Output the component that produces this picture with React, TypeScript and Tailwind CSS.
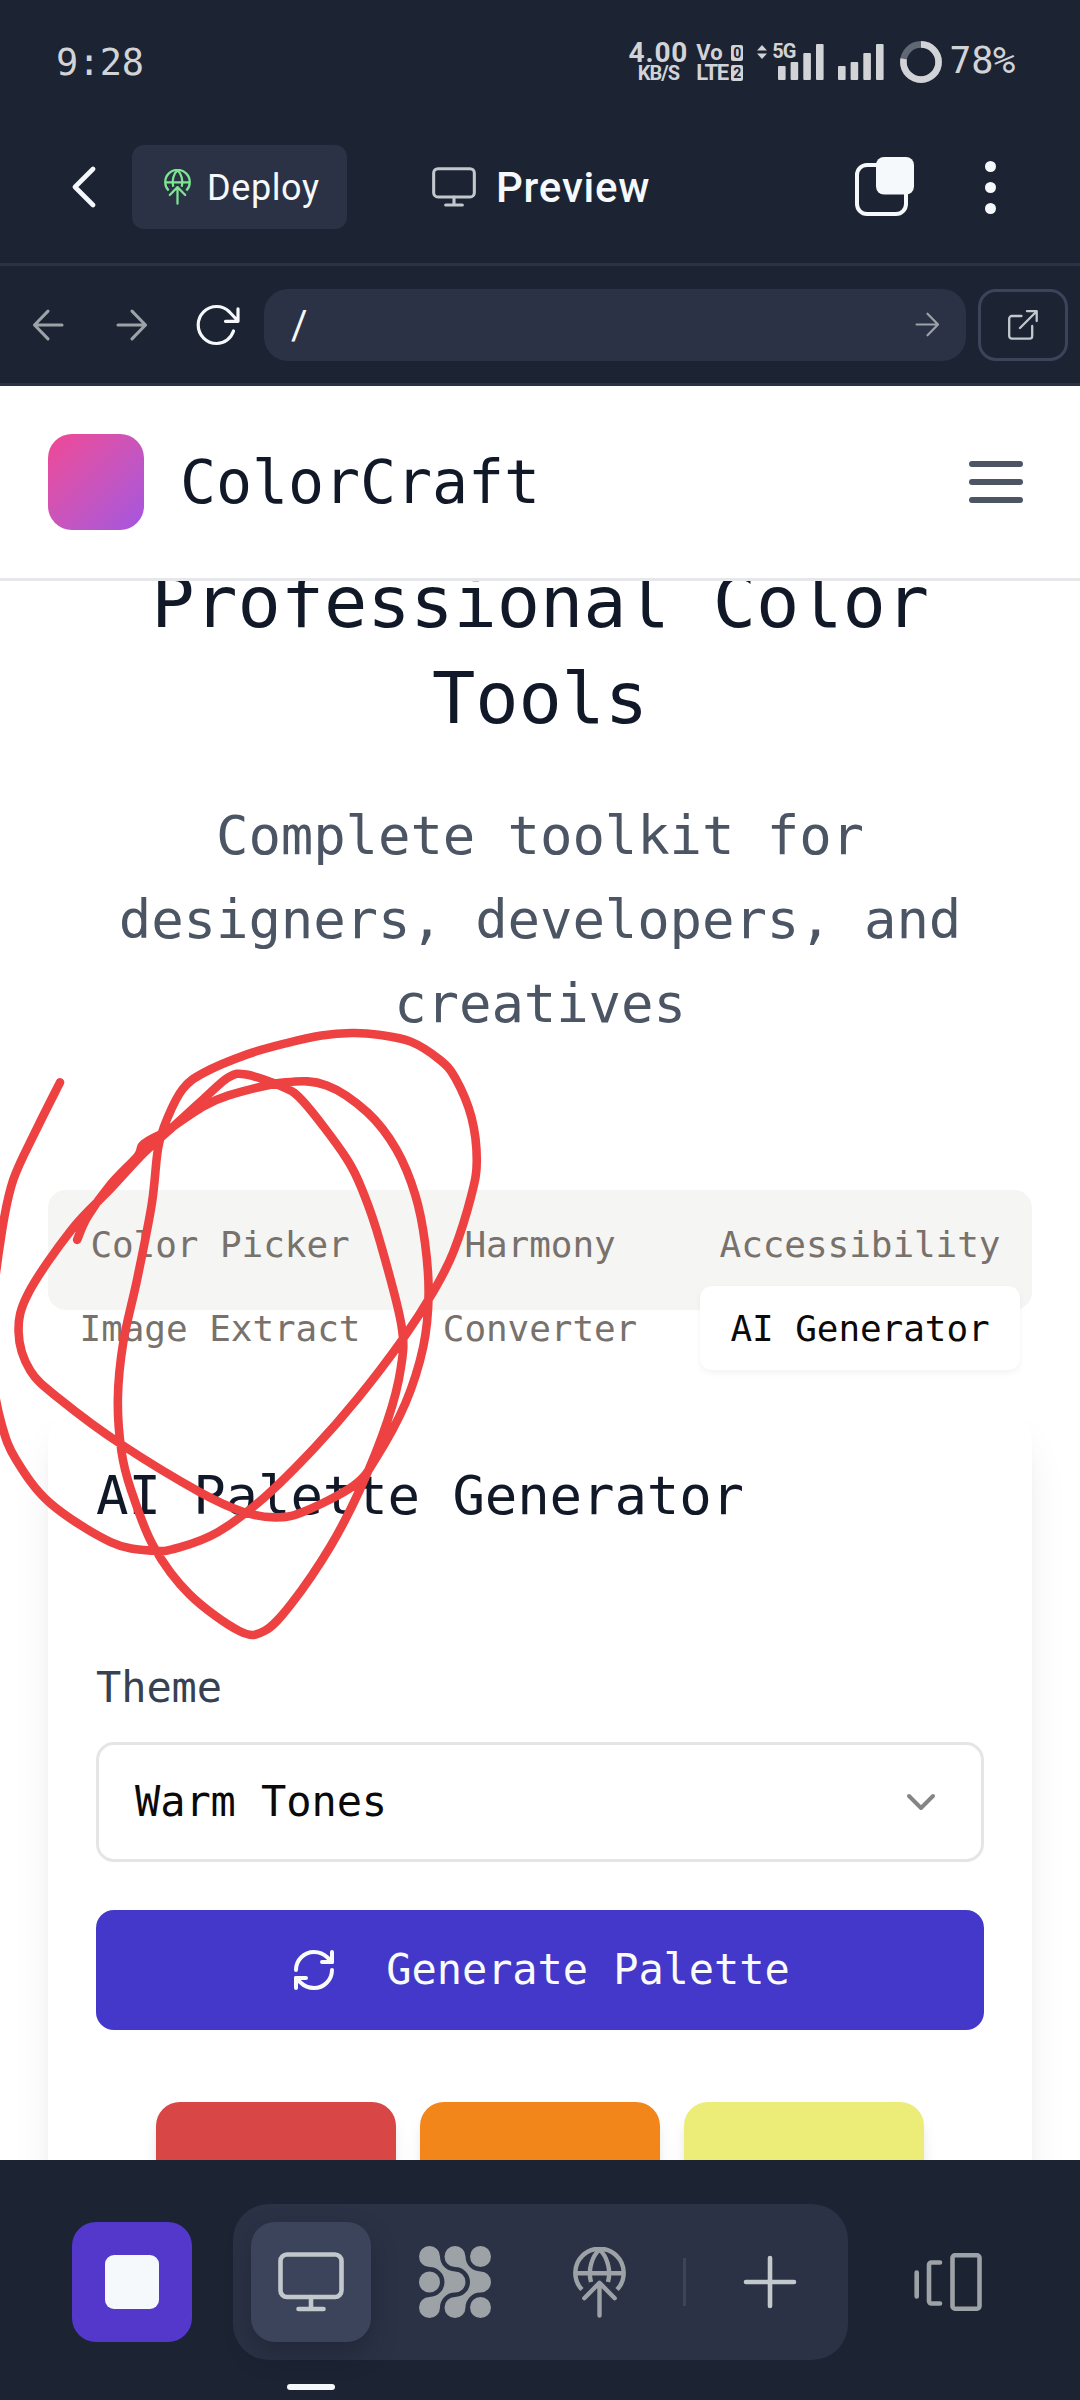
import React from "react";
import { ChevronDown, RefreshCw } from "lucide-react";

const MONO = "font-['DejaVu_Sans_Mono','Liberation_Mono',monospace]";
const SANS = "font-[Roboto,'Liberation_Sans',sans-serif]";

type IconProps = { className?: string };

function MonitorIcon({ className }: IconProps) {
  return (
    <svg viewBox="0 0 66 60" className={className} fill="none" stroke="currentColor" strokeWidth="4.6" strokeLinecap="round">
      <rect x="2.5" y="2.5" width="61" height="42.5" rx="6.5" />
      <path d="M33 45v12M20.5 57h25" />
    </svg>
  );
}

function DeployIcon({ className }: IconProps) {
  return (
    <svg viewBox="0 0 53 71" className={className} fill="none" stroke="currentColor" strokeWidth="4.4">
      <path d="M9 42.6A24.2 24.2 0 1 1 44 42.6" />
      <path d="M2.3 26.2h48.4M26.5 2.5C19.5 9 14.5 22 18 35M26.5 2.5C33.5 9 38.5 22 35 35" />
      <path d="M26.5 36v32.5M11.3 51.2L26.5 35.8L41.7 51.2" strokeLinecap="round" strokeLinejoin="round" />
    </svg>
  );
}

function MeshIcon({ className }: IconProps) {
  const blob =
    "M10.5 0A10.5 10.5 0 0 1 21 10.5A15 15 0 0 0 36 25.5A10.5 10.5 0 0 1 36 46.5A15 15 0 0 0 21 61.5A10.5 10.5 0 1 1 10.5 51A15 15 0 0 0 10.5 21A10.5 10.5 0 0 1 10.5 0Z";
  return (
    <svg viewBox="0 0 72 72" className={className} fill="currentColor">
      <path d={blob} />
      <path d={blob} transform="translate(25.5 0)" />
      <circle cx="10.5" cy="36" r="10.5" />
      <circle cx="61.5" cy="10.5" r="10.5" />
      <circle cx="61.5" cy="61.5" r="10.5" />
    </svg>
  );
}

function ArrowIcon({ className, left, thin }: IconProps & { left?: boolean; thin?: boolean }) {
  return (
    <svg viewBox="0 0 32 32" className={className} fill="none" stroke="currentColor" strokeWidth={thin ? 2.8 : 3.1} strokeLinecap="round" strokeLinejoin="round">
      <path d={left ? "M30 16H2.5M16 2.2L2.5 16L16 29.8" : "M2 16h27.5M16 2.2L29.5 16L16 29.8"} />
    </svg>
  );
}

function SignalBars() {
  return (
    <svg viewBox="0 0 46 36" className="h-9 w-[46px]" fill="currentColor">
      <rect x="0" y="22" width="7.6" height="14" rx="1" />
      <rect x="12.6" y="18" width="7.6" height="18" rx="1" />
      <rect x="25.3" y="9" width="7.6" height="27" rx="1" />
      <rect x="38" y="0" width="7.6" height="36" rx="1" />
    </svg>
  );
}

function StatusBar() {
  return (
    <div className="flex h-[111px] shrink-0 items-start pr-[65px] pl-[56px] text-[#d2d3d6]">
      <span className={`${MONO} mt-[41px] text-[37px] leading-[44px] tracking-[-0.4px]`}>9:28</span>
      <div className={`${SANS} ml-auto flex items-start pt-[41px] font-bold`}>
        <div className="flex w-[60px] flex-col items-center">
          <span className="h-[24px] text-[28px] leading-[24px] tracking-[0.8px]">4.00</span>
          <span className="h-[17px] text-[20px] leading-[17px] tracking-[-1px]">KB/S</span>
        </div>
        <div className="ml-[8px] flex w-[47px] flex-col">
          <div className="flex h-[20px] items-center justify-between">
            <span className="mt-[3px] text-[22px] leading-[20px]">Vo</span>
            <span className="mt-[4px] flex h-[16px] w-[12px] items-center justify-center rounded-[2px] bg-[#d2d3d6] text-[14px] leading-[16px] text-[#1c2333]">0</span>
          </div>
          <div className="flex h-[20px] items-center justify-between">
            <span className="mt-[3px] text-[22px] leading-[20px] tracking-[-1.3px]">LTE</span>
            <span className="mt-[3px] flex h-[16px] w-[12px] items-center justify-center rounded-[2px] bg-[#d2d3d6] text-[14px] leading-[16px] text-[#1c2333]">2</span>
          </div>
        </div>
        <div className="relative ml-[35px] pt-[3px]">
          <div className="absolute top-0 left-[-21px] flex items-center gap-[5px]">
            <svg viewBox="0 0 10 14" className="h-[14px] w-[10px]" fill="currentColor">
              <path d="M5 0L10 5.5H0ZM5 14L10 8.5H0Z" />
            </svg>
            <span className="text-[20px] leading-[21px] tracking-[-1px]">5G</span>
          </div>
          <SignalBars />
        </div>
        <div className="ml-[14px] pt-[3px]">
          <SignalBars />
        </div>
        <svg viewBox="0 0 42 42" className="ml-[16px] h-[42px] w-[42px]" fill="none" strokeWidth="6.6">
          <circle cx="21" cy="21" r="17.6" stroke="#626774" />
          <circle cx="21" cy="21" r="17.6" stroke="currentColor" pathLength="100" strokeDasharray="78 22" transform="rotate(-90 21 21)" />
        </svg>
      </div>
      <span className={`${MONO} mt-[40px] ml-[7px] text-[37px] leading-[42px] tracking-[-0.4px]`}>78%</span>
    </div>
  );
}

function AppBar() {
  return (
    <div className={`${SANS} flex h-[155px] shrink-0 items-center border-b-[3px] border-[#2b3245] pr-[84px] pl-[72px] text-[#f5f9fc]`}>
      <svg viewBox="0 0 24 42" className="h-[42px] w-6" fill="none" stroke="currentColor" strokeWidth="4.6" strokeLinecap="round" strokeLinejoin="round">
        <path d="M21 3L3 21L21 39" />
      </svg>
      <button className="ml-9 flex h-[84px] w-[215px] items-center rounded-xl bg-[#2b3245] pl-8">
        <DeployIcon className="h-[36px] w-[27px] text-[#7ee691]" />
        <span className="mt-[2px] ml-[16px] text-[36px] leading-none tracking-[0.6px]">Deploy</span>
      </button>
      <MonitorIcon className="ml-[85px] h-[40px] w-[44px] text-[#c2c8cc]" />
      <span className="mt-[2px] ml-[20px] text-[42px] leading-none font-medium tracking-[0.8px]">Preview</span>
      <svg viewBox="0 0 60 60" className="ml-auto h-[60px] w-[60px]" fill="none">
        <rect x="2" y="8" width="49" height="49" rx="10" stroke="currentColor" strokeWidth="4" />
        <rect x="21" y="0" width="38" height="37.5" rx="8" fill="currentColor" />
      </svg>
      <div className="ml-[70px] flex flex-col gap-[10px]">
        {[0, 1, 2].map((n) => (
          <span key={n} className="h-[11px] w-[11px] rounded-full bg-current" />
        ))}
      </div>
    </div>
  );
}

function AddressBar() {
  return (
    <div className="flex h-[120px] shrink-0 items-center border-b-[3px] border-[#2b3245] pr-3 pl-8 text-[#f5f9fc]">
      <ArrowIcon left className="h-8 w-8 text-[#9da2a6]" />
      <ArrowIcon className="ml-[52px] h-8 w-8 text-[#9da2a6]" />
      <svg viewBox="0 0 46 42" className="ml-[47px] h-[42px] w-[46px]" fill="none" stroke="currentColor" strokeWidth="3.2" strokeLinecap="round" strokeLinejoin="round">
        <path d="M38.5 27C36 34.5 29.5 39.5 21.7 39.5A18.5 18.5 0 1 1 21.7 2.5C27.5 2.5 31 4.5 34.5 8L43 17M43 4.8V17.3H30.5" />
      </svg>
      <div className="ml-[23px] flex h-[72px] w-[702px] items-center justify-between rounded-3xl bg-[#2b3245] pr-[26px] pl-[27px]">
        <span className={`${SANS} mt-[3px] text-[40px] leading-none`}>/</span>
        <ArrowIcon thin className="h-[25px] w-[25px] text-[#9da2a6]" />
      </div>
      <button className="ml-3 flex h-[72px] w-[90px] items-center justify-center rounded-[18px] border-[3px] border-[#3c445c] text-[#c2c8cc]">
        <svg viewBox="0 0 30 30" className="h-[30px] w-[30px]" fill="none" stroke="currentColor" strokeWidth="2.3" strokeLinecap="round" strokeLinejoin="round">
          <path d="M13.5 6H4A2.7 2.7 0 0 0 1.2 8.7V26A2.7 2.7 0 0 0 4 28.7H21.5A2.7 2.7 0 0 0 24.2 26V16M12 18L28.7 1.2M19 1.2H28.7V11" />
        </svg>
      </button>
    </div>
  );
}

function SiteHeader() {
  return (
    <header className="relative z-10 flex h-[195px] shrink-0 items-center border-b-[3px] border-[#e5e7eb] bg-white px-12">
      <div className="h-24 w-24 rounded-3xl bg-linear-to-br from-[#f04694] to-[#a455e0]" />
      <span className="ml-9 text-[60px] leading-[84px] tracking-[-0.12px] text-[#111827]">ColorCraft</span>
      <svg viewBox="0 0 24 24" className="ml-auto h-[72px] w-[72px] text-[#4b5563]" fill="none" stroke="currentColor" strokeWidth="2" strokeLinecap="round">
        <path d="M4 6h16M4 12h16M4 18h16" />
      </svg>
    </header>
  );
}

const tabs = ["Color Picker", "Harmony", "Accessibility", "Image Extract", "Converter", "AI Generator"];

function Tabs() {
  return (
    <div className="h-[120px] rounded-[18px] bg-[#f5f5f4] p-3">
      <div className="grid grid-cols-3">
        {tabs.map((tab) => (
          <button
            key={tab}
            className={
              tab === "AI Generator"
                ? "h-[84px] rounded-xl bg-white pt-px text-[36px] tracking-[-0.07px] text-[#0c0a09] shadow-[0_3px_6px_rgba(0,0,0,0.05)]"
                : "h-[84px] rounded-xl pt-px text-[36px] tracking-[-0.07px] text-[#78716c]"
            }
          >
            {tab}
          </button>
        ))}
      </div>
    </div>
  );
}

function GeneratorCard() {
  return (
    <section className="mt-24 h-[960px] rounded-[36px] bg-white p-12 shadow-[0_30px_45px_-9px_rgba(0,0,0,0.1),0_12px_18px_-12px_rgba(0,0,0,0.1)]">
      <h2 className="text-[54px] leading-[84px] tracking-[-0.11px] text-[#111827]">AI Palette Generator</h2>
      <label className="mt-[120px] block text-[42px] leading-[60px] tracking-[-0.08px] text-[#374151]">Theme</label>
      <div className="mt-6 flex h-[120px] items-center justify-between rounded-[18px] border-[3px] border-[#e7e5e4] px-9">
        <span className="text-[42px] leading-[60px] tracking-[-0.08px] text-[#0c0a09]">Warm Tones</span>
        <ChevronDown size={48} className="text-[#858585]" />
      </div>
      <button className="mt-12 flex h-[120px] w-full items-center justify-center gap-12 rounded-[18px] bg-[#4338ca] text-[#fafaf9]">
        <RefreshCw size={48} />
        <span className="text-[42px] leading-[60px] tracking-[-0.08px]">Generate Palette</span>
      </button>
      <div className="mt-[72px] flex justify-center gap-6">
        <div className="h-60 w-60 rounded-3xl bg-[#d94646] shadow-[0_12px_18px_-3px_rgba(0,0,0,0.1),0_6px_12px_-6px_rgba(0,0,0,0.1)]" />
        <div className="h-60 w-60 rounded-3xl bg-[#f2861b] shadow-[0_12px_18px_-3px_rgba(0,0,0,0.1),0_6px_12px_-6px_rgba(0,0,0,0.1)]" />
        <div className="h-60 w-60 rounded-3xl bg-[#ebed78] shadow-[0_12px_18px_-3px_rgba(0,0,0,0.1),0_6px_12px_-6px_rgba(0,0,0,0.1)]" />
      </div>
    </section>
  );
}

const scribble: [number, number][] = [
  [168, 190], [100, 302], [37, 415], [5, 535], [-22, 720], [-20, 870], [5, 980], [45, 1060], [140, 1160], [310, 1250],
  [430, 1270], [500, 1263], [610, 1227], [740, 1147], [880, 1033], [1000, 920], [1125, 785], [1215, 670], [1270, 580],
  [1320, 450], [1335, 370], [1320, 270], [1275, 180], [1230, 137], [1150, 96], [1060, 80], [985, 76], [900, 82],
  [800, 100], [690, 126], [570, 168], [512, 205], [470, 270], [443, 340], [425, 470], [385, 640], [345, 790],
  [330, 920], [340, 1040], [367, 1130], [430, 1260], [530, 1370], [670, 1455], [740, 1455], [815, 1393], [925, 1260],
  [1010, 1125], [1085, 970], [1122, 850], [1124, 750], [1065, 560], [1020, 450], [970, 365], [850, 235], [790, 200],
  [690, 172], [640, 178], [570, 228], [470, 303], [400, 355], [310, 435], [200, 530], [80, 675], [52, 765],
  [85, 855], [170, 922], [340, 1025], [560, 1135], [680, 1180], [770, 1193], [850, 1180], [990, 1120], [1050, 1060],
  [1135, 930], [1185, 800], [1200, 680], [1190, 560], [1163, 450], [1110, 345], [1030, 260], [915, 197], [800, 190],
  [640, 220], [560, 250], [470, 300], [402, 332], [385, 360], [310, 425], [245, 500], [216, 553],
];

function smoothPath(p: [number, number][]) {
  let d = `M${p[0][0]} ${p[0][1]}`;
  for (let i = 0; i < p.length - 1; i++) {
    const a = p[Math.max(i - 1, 0)];
    const b = p[i];
    const c = p[i + 1];
    const e = p[Math.min(i + 2, p.length - 1)];
    d += `C${b[0] + (c[0] - a[0]) / 6} ${b[1] + (c[1] - a[1]) / 6} ${c[0] - (e[0] - b[0]) / 6} ${c[1] - (e[1] - b[1]) / 6} ${c[0]} ${c[1]}`;
  }
  return d;
}

function Annotation() {
  return (
    <svg viewBox="0 0 1568 1568" preserveAspectRatio="none" className="pointer-events-none absolute top-[1000px] left-0 z-20 h-[680px] w-[560px]" fill="none">
      <path d={smoothPath(scribble)} stroke="#ee4141" strokeWidth="8.6" strokeLinecap="round" strokeLinejoin="round" vectorEffect="non-scaling-stroke" />
    </svg>
  );
}

function BottomBar() {
  return (
    <nav className="relative z-10 flex h-60 shrink-0 items-center bg-[#1c2333] px-[72px]">
      <button className="mt-1 flex h-[120px] w-[120px] items-center justify-center rounded-3xl bg-[#5438cc]">
        <span className="h-[54px] w-[54px] rounded-[9px] bg-[#f5f9fc]" />
      </button>
      <div className="mt-1 ml-[41px] flex h-[156px] w-[615px] items-center rounded-[36px] bg-[#2b3245] pl-[18px] text-[#9da2a6]">
        <div className="relative flex h-[120px] w-[120px] items-center justify-center rounded-3xl bg-[#3c445c] shadow-[0_12px_24px_rgba(20,24,36,0.35)]">
          <MonitorIcon className="h-[60px] w-[66px] text-[#c2c8cc]" />
          <span className="absolute top-[162px] left-9 h-[6px] w-12 rounded-full bg-[#f5f9fc]" />
        </div>
        <MeshIcon className="ml-12 h-[72px] w-[72px]" />
        <DeployIcon className="ml-[82px] h-[71px] w-[53px]" />
        <div className="ml-[57px] h-12 w-[3px] bg-[#3c445c]" />
        <svg viewBox="0 0 54 54" className="ml-[57px] h-[54px] w-[54px] text-[#c2c8cc]" fill="none" stroke="currentColor" strokeWidth="4.6" strokeLinecap="round">
          <path d="M27 3v48M3 27h48" />
        </svg>
      </div>
      <svg viewBox="0 0 68 58" className="mt-1 ml-[66px] h-[58px] w-[68px] text-[#9da2a6]" fill="none" stroke="currentColor" strokeWidth="4.6" strokeLinecap="round" strokeLinejoin="round">
        <path d="M2.7 19.5v24M26 9.5H17.5A2.5 2.5 0 0 0 15 12V48A2.5 2.5 0 0 0 17.5 50.5H26" />
        <rect x="38.5" y="2.3" width="27" height="53.4" rx="2.5" />
      </svg>
    </nav>
  );
}

export default function App() {
  return (
    <div className="relative flex h-[2400px] w-[1080px] flex-col overflow-hidden bg-[#1c2333]">
      <StatusBar />
      <AppBar />
      <AddressBar />
      <div className={`${MONO} flex h-[1774px] shrink-0 flex-col overflow-hidden bg-white`}>
        <SiteHeader />
        <main className="-mt-[27px] shrink-0 px-12">
          <div className="mb-36 text-center">
            <h1 className="text-[72px] leading-[96px] tracking-[-0.14px] text-[#111827]">
              Professional Color
              <br />
              Tools
            </h1>
            <p className="mt-12 text-[54px] leading-[84px] tracking-[-0.11px] text-[#4b5563]">
              Complete toolkit for
              <br />
              designers, developers, and
              <br />
              creatives
            </p>
          </div>
          <Tabs />
          <GeneratorCard />
        </main>
      </div>
      <BottomBar />
      <Annotation />
    </div>
  );
}
